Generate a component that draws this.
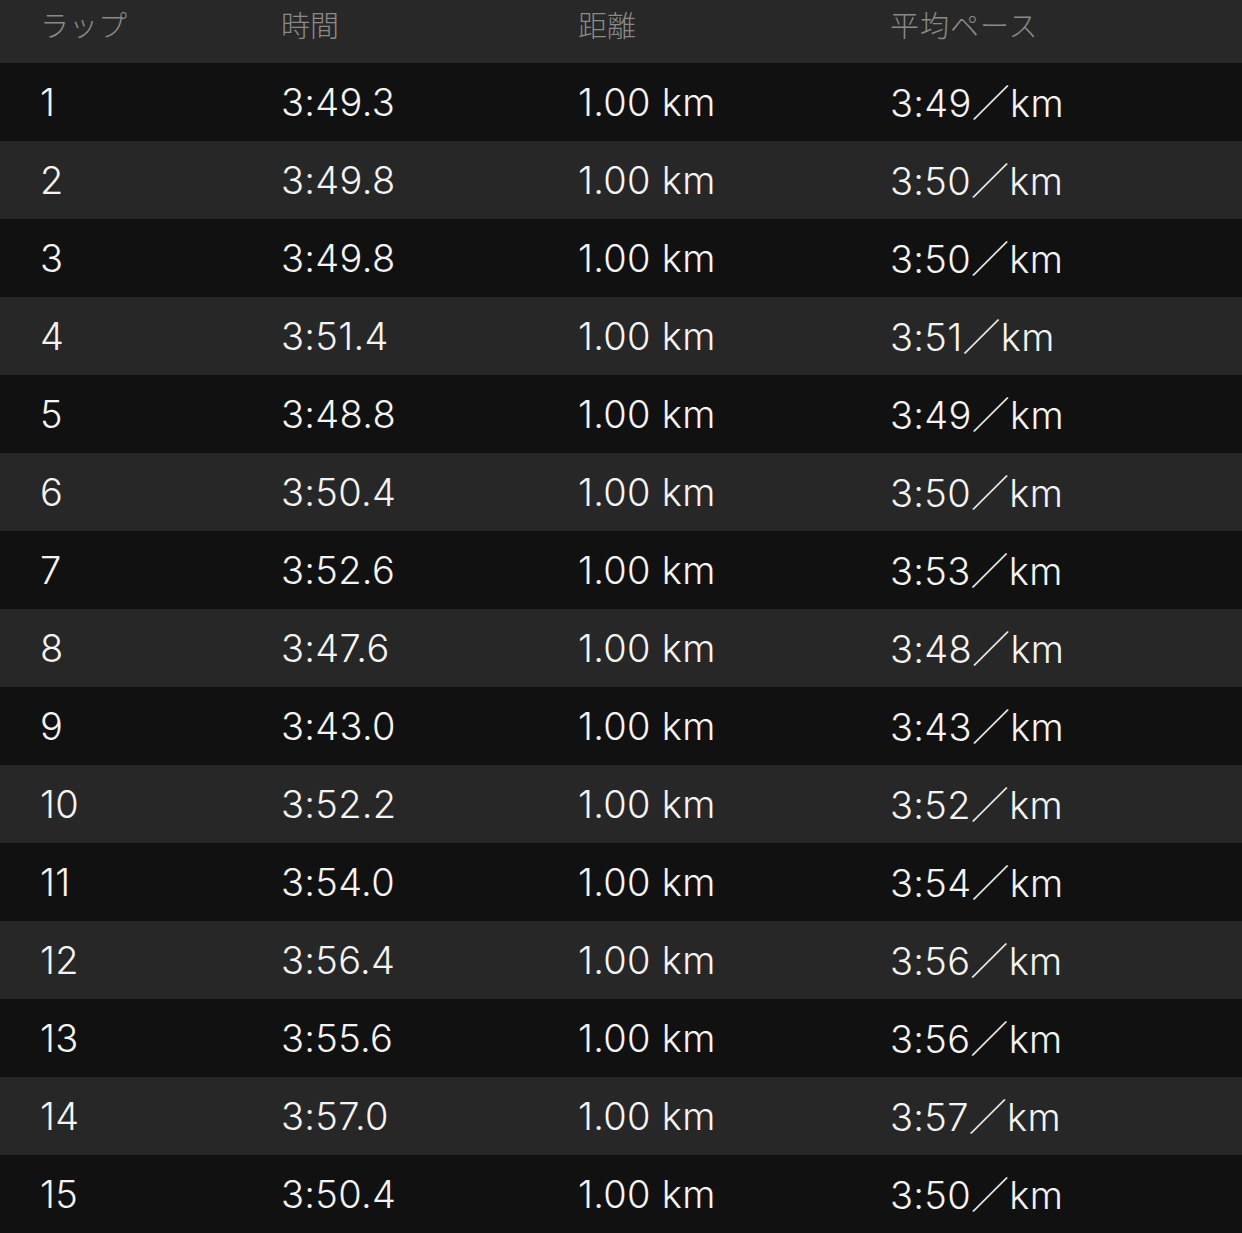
const laps = [
  ["1", "3:49.3", "3:49"],
  ["2", "3:49.8", "3:50"],
  ["3", "3:49.8", "3:50"],
  ["4", "3:51.4", "3:51"],
  ["5", "3:48.8", "3:49"],
  ["6", "3:50.4", "3:50"],
  ["7", "3:52.6", "3:53"],
  ["8", "3:47.6", "3:48"],
  ["9", "3:43.0", "3:43"],
  ["10", "3:52.2", "3:52"],
  ["11", "3:54.0", "3:54"],
  ["12", "3:56.4", "3:56"],
  ["13", "3:55.6", "3:56"],
  ["14", "3:57.0", "3:57"],
  ["15", "3:50.4", "3:50"],
];

const cols = "grid grid-cols-[241px_297px_312px_1fr] pl-[40px]";

export default function App() {
  return (
    <div className="w-[1242px] h-[1233px] bg-[#111111] font-['Inter','Noto_Sans_CJK_JP',sans-serif] overflow-hidden">
      <div className={`${cols} h-[63px] items-center pb-[13px] bg-[#282828] text-[#8a8a8a] text-[29px] font-['Noto_Sans_CJK_JP',sans-serif] font-light`}>
        <span>ラップ</span>
        <span>時間</span>
        <span>距離</span>
        <span className="tracking-[1px]">平均ペース</span>
      </div>
      {laps.map(([n, time, pace], i) => (
        <div
          key={n}
          className={`${cols} h-[78px] items-center text-[38px] font-[350] tracking-[0.3px] text-[#f4f4f4] ${i % 2 === 0 ? "bg-[#111111]" : "bg-[#272727]"}`}
        >
          <span>{n}</span>
          <span>{time}</span>
          <span>1.00 km</span>
          <span>
            {pace}
            <span className="font-['Noto_Sans_CJK_JP',sans-serif] font-light">／</span>
            km
          </span>
        </div>
      ))}
    </div>
  );
}
